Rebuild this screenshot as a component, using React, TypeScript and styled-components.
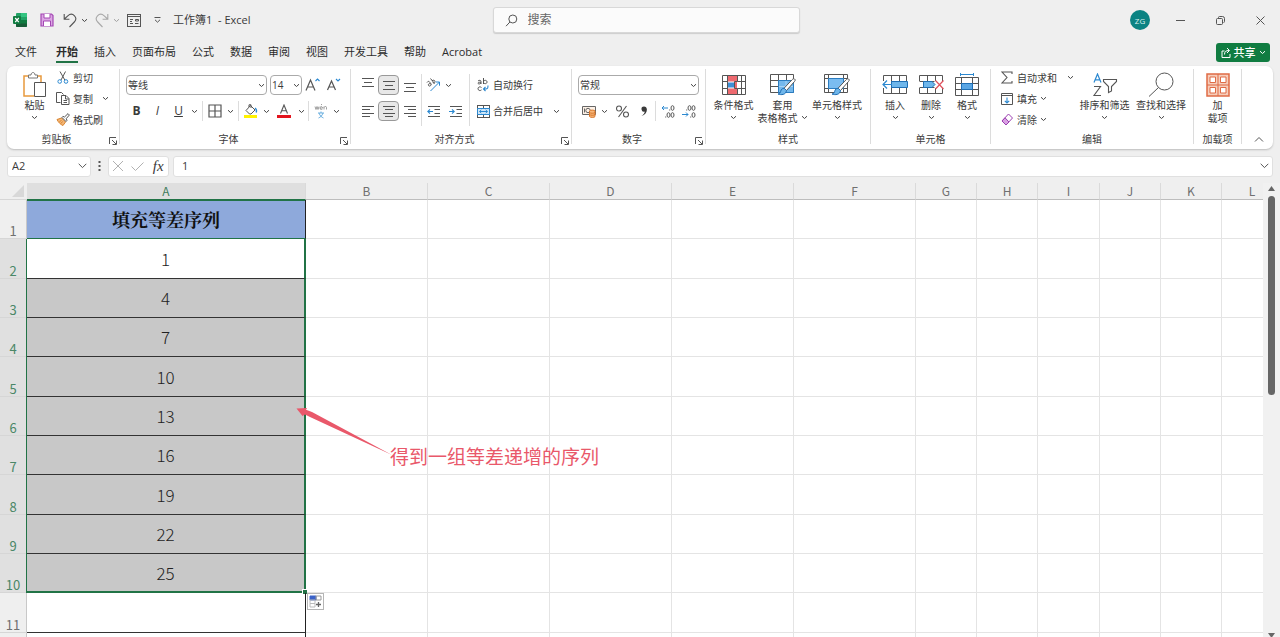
import React from "react";
import styled, { createGlobalStyle, css } from "styled-components";

const ui = '"Open Sans", "Noto Sans CJK SC", sans-serif';
const cjk = '"Noto Sans CJK SC", sans-serif';
const green = "#217346";
const ink = "#3a3a3a";
const line = "#555";
const blue = "#2b88d0";

const Global = createGlobalStyle`
  *, *::before, *::after { box-sizing: border-box; }
  body { margin: 0; background: #efefef; font-family: ${ui}; color: ${ink}; }
  button, select, input { font: inherit; color: inherit; }
  button { border: 0; background: none; padding: 0; cursor: pointer; }
  svg { display: block; flex: none; }
`;

const Page = styled.div`
  display: flex;
  flex-direction: column;
  height: 100vh;
  overflow: hidden;
`;

/* ---------- title bar ---------- */
const TitleBar = styled.header`
  display: grid;
  grid-template-columns: 1fr 307px 1fr;
  align-items: center;
  height: 40px;
  padding-left: 12px;
  flex: none;
`;
const QuickAccess = styled.div`
  display: flex;
  align-items: center;
`;
const ToolButton = styled.button<{ $w: number; $faded?: boolean }>`
  display: flex;
  align-items: center;
  justify-content: center;
  width: ${(p) => p.$w}px;
  height: 20px;
  opacity: ${(p) => (p.$faded ? 0.45 : 1)};
`;
const AppIcon = styled.span`
  width: 22px;
`;
const DocTitle = styled.h1`
  margin: 0 0 0 9px;
  font-size: 11px;
  line-height: 16px;
  font-weight: 400;
  white-space: nowrap;
`;
const SearchBox = styled.label`
  display: flex;
  align-items: center;
  gap: 10px;
  height: 26px;
  padding: 0 11px;
  background: #fbfbfb;
  border: 1px solid #d8d8d8;
  border-radius: 3px;
  box-shadow: 0 1px 1px #ccc;
`;
const SearchInput = styled.input`
  flex: 1;
  min-width: 0;
  border: 0;
  outline: 0;
  padding: 0;
  background: none;
  font-size: 12px;
  line-height: 16px;
  &::placeholder { color: #666; opacity: 1; }
`;
const WindowControls = styled.div`
  display: flex;
  justify-content: flex-end;
  align-items: center;
`;
const Avatar = styled.button`
  width: 20px;
  height: 20px;
  margin-right: 10px;
  border-radius: 50%;
  background: #0b8383;
  color: #d8f0f0;
  font-size: 8px;
`;

/* ---------- tabs ---------- */
const TabBar = styled.nav`
  display: flex;
  align-items: flex-start;
  height: 26px;
  padding: 3px 10px 0 15px;
  flex: none;
`;
const Tab = styled.a<{ $active?: boolean; $first?: boolean }>`
  margin-right: ${(p) => (p.$first ? 19 : 16)}px;
  padding-bottom: 1px;
  font-size: 11px;
  line-height: 17px;
  color: #2c2c2c;
  text-decoration: none;
  white-space: nowrap;
  border-bottom: 2px solid transparent;
  ${(p) => p.$active && css`
    font-weight: 700;
    border-color: ${green};
  `}
`;
const ShareButton = styled.button`
  display: flex;
  align-items: center;
  justify-content: center;
  gap: 3px;
  width: 54px;
  height: 19px;
  margin-left: auto;
  border-radius: 3px;
  background: #107c41;
  color: #fff;
  font-size: 11px;
  line-height: 16px;
  font-weight: 500;
`;

/* ---------- ribbon ---------- */
const Ribbon = styled.section`
  display: flex;
  height: 83px;
  margin: 0 7px;
  background: #fff;
  border-radius: 7px;
  box-shadow: 0 1px 2px #bbb;
  flex: none;
`;
const Rule = styled.span`
  width: 1px;
  margin: 3px 0 5px;
  background: #dcdcdc;
  flex: none;
`;
const InnerRule = styled.span<{ $gap?: number; $top?: number }>`
  width: 1px;
  align-self: stretch;
  margin: ${(p) => p.$top ?? 0}px ${(p) => p.$gap ?? 1}px 0;
  background: #dcdcdc;
  flex: none;
`;
const GroupBox = styled.div<{ $w: number }>`
  display: flex;
  flex-direction: column;
  width: ${(p) => p.$w}px;
  flex: none;
`;
const GroupBody = styled.div`
  display: flex;
  height: 66px;
  padding: 0 6px;
`;
const GroupFoot = styled.div`
  display: flex;
  height: 15px;
`;
const GroupName = styled.span`
  flex: 1;
  text-align: center;
  font-size: 10px;
  line-height: 15px;
`;
const Launcher = styled.button`
  display: flex;
  align-items: center;
  justify-content: center;
  width: 13px;
  padding-top: 2px;
`;
const BigButton = styled.button<{ $w: number }>`
  display: flex;
  flex-direction: column;
  align-items: center;
  width: ${(p) => p.$w}px;
  padding-top: 5px;
  font-size: 10px;
  line-height: 12px;
  white-space: nowrap;
  flex: none;
`;
const BigIcon = styled.span`
  display: flex;
  align-items: center;
  height: 27px;
`;
const BigLine = styled.span`
  display: flex;
  align-items: center;
  gap: 3px;
  height: 13px;
`;
const Column = styled.div<{ $pad?: number }>`
  display: flex;
  flex-direction: column;
  padding: 1px 0 0 ${(p) => p.$pad ?? 0}px;
`;
const SmallButton = styled.button`
  display: flex;
  align-items: center;
  gap: 3px;
  height: 21px;
  font-size: 10px;
  line-height: 14px;
  white-space: nowrap;
`;
const IconSlot = styled.span`
  display: flex;
  justify-content: center;
  width: 14px;
  flex: none;
`;
const Wide = styled.span<{ $w: number }>`
  width: ${(p) => p.$w}px;
  text-align: left;
`;
const Stack = styled.div`
  display: flex;
  flex-direction: column;
  gap: 6px;
  padding-top: 9px;
  height: 58px;
`;
const Strip = styled.div`
  display: flex;
  align-items: center;
  height: 20px;
`;
const SplitBody = styled.div`
  display: flex;
  height: 60px;
`;
const Cmd = styled.button<{ $w: number; $on?: boolean; $size?: number }>`
  display: flex;
  align-items: center;
  justify-content: center;
  width: ${(p) => p.$w}px;
  height: 20px;
  font-size: ${(p) => p.$size ?? 12}px;
  line-height: 16px;
  border-radius: 4px;
  flex: none;
  ${(p) => p.$on && css`
    background: #e8e8e8;
    border: 1px solid #999;
  `}
`;
const TextCmd = styled.button`
  display: flex;
  align-items: center;
  gap: 3px;
  height: 20px;
  padding-left: 5px;
  font-size: 10px;
  line-height: 14px;
  white-space: nowrap;
`;
const PickWrap = styled.span<{ $w: number }>`
  display: grid;
  width: ${(p) => p.$w}px;
  height: 20px;
  margin-right: 3px;
  align-items: center;
  & > * { grid-area: 1 / 1; }
  & > svg { justify-self: end; margin-right: 2px; pointer-events: none; }
`;
const Pick = styled.select`
  appearance: none;
  width: 100%;
  height: 20px;
  padding: 0 1px;
  border: 1px solid #aaa;
  border-radius: 4px;
  background: #fff;
  font-size: 10px;
  line-height: 16px;
`;
const CollapseArea = styled.div`
  display: flex;
  flex: 1;
  align-items: flex-end;
  justify-content: flex-end;
  padding: 0 9px 4px 0;
`;

/* ---------- formula bar ---------- */
const FormulaBar = styled.section`
  display: flex;
  align-items: center;
  height: 34px;
  padding: 0 7px;
  flex: none;
`;
const Field = styled.div<{ $w?: number }>`
  display: flex;
  align-items: center;
  ${(p) => (p.$w ? `width: ${p.$w}px; flex: none;` : "flex: 1;")}
  height: 21px;
  background: #fff;
  border: 1px solid #e0e0e0;
  border-radius: 3px;
`;
const FieldInput = styled.input<{ $pad: number }>`
  flex: 1;
  min-width: 0;
  border: 0;
  outline: 0;
  padding: 0 0 0 ${(p) => p.$pad}px;
  background: none;
  font-size: 11px;
  line-height: 16px;
`;
const FxButton = styled.button`
  width: 20px;
  font: italic 400 15px/18px "Liberation Serif", serif;
`;

/* ---------- sheet ---------- */
const Sheet = styled.main`
  display: flex;
  flex: 1;
  min-height: 0;
`;
const Viewport = styled.div`
  position: relative;
  flex: 1;
  min-width: 0;
  overflow: hidden;
  background: #fff;
`;
const Grid = styled.table`
  table-layout: fixed;
  width: 1283px;
  border-collapse: separate;
  border-spacing: 0;
  font-family: ${cjk};
`;
const ColHead = styled.th<{ $on?: boolean }>`
  padding: 0;
  height: 17px;
  font-weight: 400;
  font-size: 12px;
  line-height: 14px;
  color: ${(p) => (p.$on ? "#3f7d5c" : "#707070")};
  background: ${(p) => (p.$on ? "#dfdfdf" : "#efefef")};
  border-right: 1px solid #dadada;
  border-bottom: 1px solid ${(p) => (p.$on ? green : "#bdbdbd")};
`;
const Corner = styled.td`
  padding: 0;
  height: 17px;
  background: #efefef;
  border-bottom: 1px solid #d6d6d6;
  svg { margin-left: 12px; }
`;
const Row = styled.tr`
  height: 39px;
  &:nth-child(3n + 2) { height: 40px; }
`;
const RowHead = styled.th<{ $on?: boolean }>`
  padding: 0;
  vertical-align: bottom;
  font-weight: 400;
  font-size: 13px;
  line-height: 14px;
  color: ${(p) => (p.$on ? "#4a8767" : "#707070")};
  background: ${(p) => (p.$on ? "#e0e0e0" : "#efefef")};
  border-right: 1px solid #c8c8c8;
  border-bottom: 1px solid #d6d6d6;
`;
const Cell = styled.td`
  padding: 0;
  border-right: 1px solid #e4e4e4;
  border-bottom: 1px solid #e4e4e4;
`;
const DataCell = styled.td<{ $kind: "title" | "active" | "picked" | "last" | "plain" }>`
  position: relative;
  padding: 0;
  text-align: center;
  font-weight: 300;
  font-size: 17px;
  line-height: 24px;
  color: #222;
  border-right: 1px solid #222;
  border-bottom: 1px solid #333;
  ${(p) => p.$kind === "title" && css`
    background: #8ea9db;
    color: #111;
    font-family: "Noto Serif CJK SC", "Noto Sans CJK SC", serif;
    font-size: 18px;
    font-weight: 700;
    border-bottom: 1px solid ${green};
    box-shadow: inset 0 1px 0 ${green};
  `}
  ${(p) => (p.$kind === "active" || p.$kind === "picked" || p.$kind === "last") && css`
    background: ${p.$kind === "active" ? "#fff" : "#c8c8c8"};
    border-right: 2px solid ${green};
    box-shadow: -1px 0 0 ${green};
  `}
  ${(p) => p.$kind === "last" && css`
    border-bottom: 2px solid ${green};
  `}
`;
const FillHandle = styled.span`
  position: absolute;
  right: -3px;
  bottom: -3px;
  width: 5px;
  height: 5px;
  background: ${green};
  border: 1px solid #fff;
  border-width: 1px 0 0 1px;
`;
const FillOptions = styled.button`
  position: absolute;
  left: 280px;
  top: 39px;
  z-index: 2;
  display: flex;
  align-items: center;
  justify-content: center;
  width: 17px;
  height: 17px;
  background: #fff;
  border: 1px solid #b5b5b5;
`;
const Note = styled.div`
  position: absolute;
  left: 296px;
  top: 224px;
  display: flex;
  align-items: flex-end;
  color: #e9586a;
  font-family: ${cjk};
  font-size: 19px;
  line-height: 24px;
  white-space: nowrap;
  pointer-events: none;
`;
const NoteText = styled.span`
  margin: 0 0 -11px -2px;
`;
const ScrollTrack = styled.div`
  display: flex;
  flex-direction: column;
  align-items: center;
  gap: 5px;
  width: 17px;
  padding-top: 3px;
  background: #f1f1f1;
  flex: none;
`;
const Thumb = styled.div`
  width: 7px;
  height: 199px;
  border-radius: 4px;
  background: #666;
`;
const TrackSpace = styled.div`
  flex: 1;
`;

/* ---------- icons ---------- */
type SvgProps = { w: number; h: number; children: React.ReactNode };
const Svg = ({ w, h, children }: SvgProps) => (
  <svg width={w} height={h} viewBox={`0 0 ${w} ${h}`} fill="none" stroke={line} strokeWidth="1" aria-hidden="true">
    {children}
  </svg>
);
const Chevron = ({ color = "#444" }: { color?: string }) => (
  <svg width="7" height="5" viewBox="0 0 7 5" fill="none" stroke={color} aria-hidden="true">
    <path d="M1 1.200 3.500 3.500 6 1.200" />
  </svg>
);
const WideChevron = () => (
  <Svg w={9} h={6}><path d="M.7.8 4.500 4.600 8.300.8" /></Svg>
);
const ExcelLogo = () => (
  <svg width="15" height="14" viewBox="0 0 15 14" aria-hidden="true">
    <rect x="4" y="0" width="11" height="14" rx="1" fill="#21a366" />
    <path d="M9 0h5a1 1 0 0 1 1 1v3H9z" fill="#33c481" />
    <path d="M4 7h11v6a1 1 0 0 1-1 1H5a1 1 0 0 1-1-1z" fill="#185c37" />
    <path d="M9 7h6v3.500H9z" fill="#107c41" />
    <rect x="1" y="3" width="8" height="8" rx="1" fill="#107c41" />
    <path d="M3.200 5 6.800 9.200M6.800 5 3.200 9.200" stroke="#fff" strokeWidth="1.200" />
  </svg>
);
const SaveIcon = () => (
  <Svg w={14} h={14}>
    <path d="M1 1h10.500L13 2.500V13H1z" fill="#dca6e4" stroke="#a347b3" strokeWidth="1.200" />
    <path d="M4 1v4h6V1M3.500 13V8h7v5" fill="#fff" stroke="#a347b3" />
  </Svg>
);
const UndoIcon = () => (
  <Svg w={14} h={15}><path d="M1.200 1v5.200h5.200M1.400 6l3.400-3.200c2.200-2 5-1.800 6.700 0 1.700 1.900 1.500 4.500-.2 6.200L6.500 14" strokeWidth="1.100" /></Svg>
);
const RedoIcon = () => (
  <Svg w={14} h={15}><path d="M12.800 1v5.200H7.600M12.600 6 9.200 2.800C7 .8 4.200 1 2.500 2.800.8 4.700 1 7.300 2.700 9l4.800 5" strokeWidth="1.100" /></Svg>
);
const FormIcon = () => (
  <Svg w={14} h={13}>
    <rect x=".5" y=".5" width="13" height="12" />
    <path d="M.5 2.500h13M3 5.500h3M3 7.500h2M3 9.500h3M8.500 5.500h3v1.500h-3zM8 9.500h3.500" />
  </Svg>
);
const CustomizeIcon = () => (
  <Svg w={7} h={6}><path d="M.5.5h6M1 2.800l2.500 2.400L6 2.800" /></Svg>
);
const SearchIcon = () => (
  <Svg w={13} h={13}><circle cx="7.800" cy="5" r="4" /><path d="M4.900 8 1 12.200" /></Svg>
);
const PasteIcon = () => (
  <Svg w={24} h={26}>
    <path d="M6 4H1v20h10" stroke="#e8993d" strokeWidth="1.500" />
    <path d="M14 4h4v6" stroke="#e8993d" strokeWidth="1.500" />
    <path d="M5.500 6V3H8c0-3.300 4-3.300 4 0h2.500v3z" fill="#fff" stroke="#777" />
    <path d="M11.500 10.500h11v14h-11z" fill="#fff" stroke="#555" />
  </Svg>
);
const CutIcon = () => (
  <Svg w={12} h={13}>
    <path d="M3 .5 7.800 9M8.500.5 4 9" />
    <circle cx="2.700" cy="10.500" r="1.800" stroke={blue} /><circle cx="9" cy="10.500" r="1.800" stroke={blue} />
  </Svg>
);
const CopyIcon = () => (
  <Svg w={14} h={13}>
    <path d="M4.500 10.500h-4V.5h5l2 2" /><path d="M5.500 3.500h4.500l3 3v6h-7.500zM9.500 3.500v3.500h3.500M7.500 8.500h3.500M7.500 10.500h3.500" fill="#fff" />
  </Svg>
);
const BrushIcon = () => (
  <Svg w={14} h={13}>
    <path d="M1 6.500 5.500 5l4 4-2.500 3.500C4.500 11.500 2.500 9.500 1 6.500z" fill="#f3b778" stroke="#d9822b" />
    <path d="m6 4.500 4 4 1-1.200-.8-1.600L13.400 2 12 .6 8.500 4l-1.600-.6z" fill="#fff" stroke="#555" />
    <path d="m3.500 8.500 2-1M5 10.500l1.500-2" stroke="#d9822b" />
  </Svg>
);
const LaunchIcon = () => (
  <Svg w={8} h={8}><path d="M.5 7V.5H7M3 3l4 4M7.500 3.500v4h-4" /></Svg>
);
const BordersIcon = () => (
  <Svg w={14} h={14}><path d="M1 1h12v12H1zM7 1v12M1 7h12" strokeWidth="1.200" /></Svg>
);
const FillColorIcon = () => (
  <Svg w={14} h={15}>
    <path d="M6.500 1.500 2 6.500l3.500 3.500h1.500L11 6z" /><path d="M5 3V.8h2V4" /><path d="M11 4c1.500 1 1.800 2.500 1.300 4.500" stroke={blue} strokeWidth="1.400" />
    <path d="M0 12.500h13" stroke="#fff200" strokeWidth="3" />
  </Svg>
);
const FontColorIcon = () => (
  <Svg w={14} h={15}>
    <path d="M3.500 9.500 7 1l3.500 8.500M4.700 6.800h4.600" strokeWidth="1.100" /><path d="M0 12.500h14" stroke="#e3141e" strokeWidth="3" />
  </Svg>
);
const PhoneticIcon = () => (
  <Svg w={14} h={15}>
    <path d="m1 2.500 1 3 1-3 1 3 1-3M6 4h2.500c0-2-2.500-2-2.500 0s1.500 1.700 2.500 1M10 5.500v-3M10 3.500c.8-1.500 2.500-1.200 2.500 0v2M7 1l1-1" stroke="#888" strokeWidth=".8" />
    <path d="M4 9h6M7 7.500V9M5 9c1 3 2.500 4 4.500 5M9 9c-1 3-2.500 4-4.500 5" stroke="#5fa8dc" strokeWidth=".9" />
  </Svg>
);
const Lines = ({ rows, ys, h = 13 }: { rows: [number, number][]; ys: number[]; h?: number }) => (
  <Svg w={13} h={h}>
    {rows.map(([a, b], i) => <path key={i} d={`M${a} ${ys[i]}H${b}`} />)}
  </Svg>
);
const TopIcon = () => <Lines rows={[[1, 13], [3, 11], [1, 13]]} ys={[2.5, 6.5, 10.5]} h={18} />;
const MiddleIcon = () => <Lines rows={[[1, 13], [3, 11], [1, 13]]} ys={[2.5, 6.5, 10.5]} />;
const BottomIcon = () => <Lines rows={[[1, 13], [3, 11], [1, 13]]} ys={[7.5, 11.5, 15.5]} h={18} />;
const LeftIcon = () => <Lines rows={[[1, 13], [1, 9], [1, 13], [1, 9]]} ys={[1.5, 4.5, 8.5, 11.5]} />;
const CenterIcon = () => <Lines rows={[[1, 13], [3, 11], [1, 13], [3, 11]]} ys={[1.5, 4.5, 8.5, 11.5]} />;
const RightIcon = () => <Lines rows={[[1, 13], [5, 13], [1, 13], [5, 13]]} ys={[1.5, 4.5, 8.5, 11.5]} />;
const OrientIcon = () => (
  <Svg w={15} h={14}>
    <path d="M1 4.500c1-1.500 2-1.500 3 0l1.500 2M4.200 5.500c-1.500 0-2.500 1.200-1.500 2.200s2.500 0 2.200-1.500M4.500.5l4 5M6 2.800c1.200-1.200 3-.6 3 .8s-1.200 2-2.300 1" />
    <path d="M4.500 13 13.500 4M9.800 4h3.700v3.700" stroke={blue} />
  </Svg>
);
const IndentIcon = ({ right }: { right?: boolean }) => (
  <Svg w={13} h={13}>
    <path d="M1 1.500h12M7.500 4.500H13M7.500 8.500H13M1 11.500h12" />
    <path d={right ? "M0 6.500h5M3 4.300 5.200 6.500 3 8.700" : "M.8 6.500H6M3 4.300.8 6.500 3 8.700"} stroke={blue} strokeWidth="1.100" />
  </Svg>
);
const WrapIcon = () => (
  <Svg w={13} h={14}>
    <path d="M1 3c1-1 3-1 3 .5V6M4 4.300C2 4 1 4.500 1 5.300S3.500 6.300 4 5M6.500 0v6M6.500 4c0-2.200 3.500-2.200 3.500 0s-3.500 2.200-3.500 0M4.500 9.500c-1.500-1.300-3.500-.5-3.500 1.200s2 2.500 3.500 1.200" />
    <path d="M10.800 7.500c.6 2-.3 3.500-2 3.500H6.500M8.500 9 6.500 11l2 2" stroke={blue} strokeWidth="1.100" />
  </Svg>
);
const MergeIcon = () => (
  <Svg w={13} h={13}>
    <rect x=".5" y=".5" width="12" height="12" /><path d="M6.500.5v3M6.500 9.500v3" />
    <path d="M.5 3.500h12v6H.5z" fill="#cfe6f8" stroke={blue} /><path d="M2.500 6.500h8M4.300 4.900 2.600 6.500l1.700 1.600M8.700 4.900l1.700 1.600-1.700 1.600" stroke={blue} />
  </Svg>
);
const CurrencyIcon = () => (
  <Svg w={14} h={13}>
    <path d="M.5 1.500h13v8H.5z" fill="#fdf1e6" stroke="#666" /><circle cx="6" cy="5.500" r="2.200" stroke="#666" /><path d="M2.500 3.500v4" stroke="#666" />
    <path d="M7.500 6v5.500c0 1.200 5.500 1.200 5.500 0V6c0-1.200-5.500-1.200-5.500 0zM7.500 7.500c1 1 4.500 1 5.500 0M7.500 9.500c1 1 4.500 1 5.500 0" fill="#f7b77a" stroke="#d9772b" />
  </Svg>
);
const PercentIcon = () => (
  <Svg w={13} h={13}><circle cx="3" cy="3.500" r="2.500" strokeWidth="1.100" /><circle cx="10" cy="9.500" r="2.500" strokeWidth="1.100" /><path d="M10.500 1 2.500 12" strokeWidth="1.100" /></Svg>
);
const CommaIcon = () => (
  <Svg w={8} h={13}><path d="M4 1.500a2.600 2.600 0 1 0 .8 5.100C4.500 8.500 3.500 9.700 1.500 11c3.500-1 5.500-3.700 5.400-6.500C6.800 2.500 5.700 1.500 4 1.500z" fill={ink} stroke="none" /></Svg>
);
const DecimalIcon = ({ less }: { less?: boolean }) => (
  <Svg w={14} h={13}>
    {less ? (
      <>
        <ellipse cx="7.500" cy="3" rx="1.500" ry="2.300" /><ellipse cx="11.500" cy="3" rx="1.500" ry="2.300" /><path d="M4.200 5h1" />
        <ellipse cx="11.500" cy="10" rx="1.500" ry="2.300" /><path d="M8.200 12h1" />
        <path d="M0 9.500h6M4 7.500l2 2-2 2" stroke={blue} />
      </>
    ) : (
      <>
        <ellipse cx="11.500" cy="3" rx="1.500" ry="2.300" /><path d="M8.200 5h1" />
        <ellipse cx="7.500" cy="10" rx="1.500" ry="2.300" /><ellipse cx="11.500" cy="10" rx="1.500" ry="2.300" /><path d="M4.200 12h1" />
        <path d="M1 3h6M3 1 1 3l2 2" stroke={blue} />
      </>
    )}
  </Svg>
);
const CondIcon = () => (
  <Svg w={24} h={20}>
    <path d="M5 1h10v5.500H5zM5 13.500h10V19H5z" fill="#ee6a70" stroke="none" />
    <path d="M12 7h3v6h-3z" fill="#ee6a70" stroke="none" />
    <path d="M5 7.500h7v5H5z" fill="#3f8fd6" stroke="none" />
    <path d="M.5.5h23v19H.5zM.5 6.500h5M15.500 6.500h8M.5 13.500h5M15.500 13.500h8M5.500.5v19M19.500.5v19M15.500.5v6h-3v7h3v6" />
  </Svg>
);
const Brush = () => (
  <>
    <path d="M24.500 6c1 .7.800 1.500 0 2.500l-8 9-2.500-2.200 8-8.500c1-1 1.700-1.300 2.500-.8z" fill="#fff" stroke="#555" />
    <path d="M14.200 15.300c-2 0-3 1-3.500 3-.3 1.500-1.200 2.500-2.700 2.700 3 1.200 8 1 8.500-3.500z" fill="#6fb6ea" stroke="#1f6fb5" />
  </>
);
const TableStyleIcon = () => (
  <Svg w={26} h={23}>
    <path d="M.5 1.500h23v18H.5zM.5 7.500h23M.5 13.500h23M8.500 1.500v18M16.500 1.500v18" />
    <path d="M8.500 7.500h15v12h-15z" fill="#74b8ec" stroke="#2b7cc0" /><path d="M16 8v11M9 13.500h14" stroke="#a8d3f5" />
    <Brush />
  </Svg>
);
const CellStyleIcon = () => (
  <Svg w={26} h={23}>
    <path d="M.5 1.500h23v18H.5zM.5 5.500h23M.5 15.500h23M4.500 1.500v18M19.500 1.500v18" />
    <path d="M4.500 5.500h15v10h-15z" fill="#7bbcf0" stroke="#2b7cc0" />
    <Brush />
  </Svg>
);
const InsertIcon = () => (
  <Svg w={26} h={19}>
    <path d="M1.500.5h23v18h-23zM9.500.5v18M17.500.5v18M1.500 6.500h23M1.500 12.500h23" />
    <path d="M0 6h9v7H0z" fill="#fff" stroke="none" />
    <path d="M9.500 6.500h16v6h-16z" fill="#6fb6ea" stroke="#1f6fb5" /><path d="M1 9.500h9M5 5.500l-4 4 4 4" stroke={blue} strokeWidth="1.200" />
  </Svg>
);
const DeleteIcon = () => (
  <Svg w={25} h={19}>
    <path d="M.5 6V.5h23V6M.5 13v5.500h23V13M8.500.5V6M16.500.5V6M8.500 13v5.500M16.500 13v5.500M.5 6.500h15M.5 12.500h15" />
    <path d="M4.500 6.500h8.500l3 3-3 3H4.500z" fill="#6fb6ea" stroke="#1f6fb5" /><path d="m16.500 5.500 8 8.500M24.500 5.500l-8 8.500" stroke="#e0505c" strokeWidth="1.200" />
  </Svg>
);
const FormatIcon = () => (
  <Svg w={24} h={24}>
    <path d="M6 1.500h12M5.500 0v3M18.500 0v3" stroke={blue} />
    <path d="M.5 4.500h23v18H.5zM.5 10.500h23M.5 16.500h23M6.500 4.500v18M17.500 4.500v18" /><path d="M6.500 10.500h11v6h-11z" fill="#5aa6e4" stroke="#1f6fb5" />
  </Svg>
);
const SumIcon = () => (
  <Svg w={12} h={13}><path d="M11 3V1H1l5 5.500L1 12h10v-2" strokeWidth="1.100" /></Svg>
);
const FillDownIcon = () => (
  <Svg w={12} h={12}><path d="M.5.5h11v11H.5zM.5 2.500h11" /><path d="M6 4.500V10M3.800 7.800 6 10l2.200-2.200" stroke={blue} strokeWidth="1.100" /></Svg>
);
const EraserIcon = () => (
  <Svg w={12} h={13}><path d="M7.500 1 11.500 5 5 12 1 8z" fill="#fff" stroke="#9b3fb0" /><path d="M4 4.800 8 9 5 12 1 8z" fill="#d9a0e3" stroke="#9b3fb0" /></Svg>
);
const SortIcon = () => (
  <Svg w={26} h={24}>
    <path d="M2 9.500 5.500 1 9 9.500M3.200 6.800h4.600" stroke={blue} strokeWidth="1.200" /><path d="M2 13.500h6.500L2 22.500h7" strokeWidth="1.100" />
    <path d="M11.500 6.500h13v2l-5 5v4.500l-3 1.500v-6l-5-5z" strokeWidth="1.100" />
  </Svg>
);
const FindIcon = () => (
  <Svg w={26} h={25}><circle cx="16.500" cy="9.500" r="8.500" /><path d="M10.500 15.500 1 24.500" /></Svg>
);
const AddinIcon = () => (
  <Svg w={24} h={24}>
    <rect x="1" y="1" width="22" height="22" fill="#f6cdbb" stroke="#df6b45" strokeWidth="1.500" /><path d="M12 1v22M1 12h22" stroke="#df6b45" />
    <path d="M4 4h5.500v5.500H4zM14.500 4H20v5.500h-5.500zM4 14.500h5.500V20H4zM14.500 14.500H20V20h-5.500z" fill="#fff" stroke="#df6b45" />
  </Svg>
);
const GrowIcon = ({ down }: { down?: boolean }) => (
  <Svg w={15} h={14}>
    <path d={down ? "M1.500 12 5.500 3l4 9M2.800 9h5.400" : "M1 12.500 5.500 2 10 12.500M2.600 9h5.800"} strokeWidth="1.200" />
    <path d={down ? "m10 1 2 2 2-2" : "m10.500 3 2-2 2 2"} stroke={blue} strokeWidth="1.100" />
  </Svg>
);

/* ---------- composition ---------- */
const Group = ({ w, name, launch, children }: { w: number; name: string; launch?: boolean; children: React.ReactNode }) => (
  <>
    <GroupBox $w={w}>
      <GroupBody>{children}</GroupBody>
      <GroupFoot>
        <GroupName>{name}</GroupName>
        {launch && <Launcher aria-label={`${name}设置`}><LaunchIcon /></Launcher>}
      </GroupFoot>
    </GroupBox>
    <Rule />
  </>
);
const Big = ({ w, icon, text, second, arrow = true }: { w: number; icon: React.ReactNode; text: string; second?: string; arrow?: boolean }) => (
  <BigButton $w={w}>
    <BigIcon>{icon}</BigIcon>
    <BigLine>{text}</BigLine>
    <BigLine>{second}{arrow && <Chevron />}</BigLine>
  </BigButton>
);
const Small = ({ icon, children }: { icon: React.ReactNode; children: React.ReactNode }) => (
  <SmallButton><IconSlot>{icon}</IconSlot>{children}</SmallButton>
);
const Dropdown = ({ w, label, value }: { w: number; label: string; value: string }) => (
  <PickWrap $w={w}>
    <Pick aria-label={label} defaultValue={value}><option>{value}</option></Pick>
    <Chevron />
  </PickWrap>
);

const tabs = ["文件", "开始", "插入", "页面布局", "公式", "数据", "审阅", "视图", "开发工具", "帮助", "Acrobat"];
const columns = ["A", "B", "C", "D", "E", "F", "G", "H", "I", "J", "K", "L"];
const columnWidths = [27, 279, 122, 122, 122, 122, 122, 61, 61, 62, 61, 61, 61];
const values = ["填充等差序列", "1", "4", "7", "10", "13", "16", "19", "22", "25", "", ""];

const kindOf = (i: number) => {
  if (i === 0) return "title" as const;
  if (i === 1) return "active" as const;
  if (i === 9) return "last" as const;
  return i < 9 ? ("picked" as const) : ("plain" as const);
};

export default function App() {
  return (
    <>
      <Global />
      <Page>
        <TitleBar>
          <QuickAccess>
            <AppIcon><ExcelLogo /></AppIcon>
            <ToolButton $w={26} aria-label="保存"><SaveIcon /></ToolButton>
            <ToolButton $w={20} aria-label="撤销"><UndoIcon /></ToolButton>
            <ToolButton $w={9} aria-label="撤销列表"><Chevron /></ToolButton>
            <ToolButton $w={25} $faded aria-label="恢复"><RedoIcon /></ToolButton>
            <ToolButton $w={4} $faded aria-label="恢复列表"><Chevron /></ToolButton>
            <ToolButton $w={32} aria-label="窗体"><FormIcon /></ToolButton>
            <ToolButton $w={14} aria-label="自定义快速访问工具栏"><CustomizeIcon /></ToolButton>
            <DocTitle>工作簿1&nbsp; - Excel</DocTitle>
          </QuickAccess>
          <SearchBox>
            <SearchIcon />
            <SearchInput aria-label="搜索" placeholder="搜索" />
          </SearchBox>
          <WindowControls>
            <Avatar>ZG</Avatar>
            <ToolButton $w={40} aria-label="最小化"><Svg w={9} h={9}><path d="M0 4.500h9" /></Svg></ToolButton>
            <ToolButton $w={40} aria-label="还原"><Svg w={9} h={9}><rect x=".5" y="2.500" width="6" height="6" rx="1" /><path d="M2.500 2V1.500a1 1 0 0 1 1-1h3a2 2 0 0 1 2 2v3a1 1 0 0 1-1 1" /></Svg></ToolButton>
            <ToolButton $w={40} aria-label="关闭"><Svg w={9} h={9}><path d="m.5.5 8 8M8.500.5l-8 8" /></Svg></ToolButton>
          </WindowControls>
        </TitleBar>

        <TabBar>
          {tabs.map((t, i) => <Tab key={t} href="#" $active={i === 1} $first={i === 0}>{t}</Tab>)}
          <ShareButton>
            <svg width="10" height="11" viewBox="0 0 10 11" fill="none" stroke="#fff" aria-hidden="true"><path d="M3.500 4H1v6.500h8V7M3.500 7.500c0-3 1.500-4 4.500-4M6 1l2.500 2.500L6 6" /></svg>
            共享
            <Chevron color="#fff" />
          </ShareButton>
        </TabBar>

        <Ribbon>
          <Group w={112} name="剪贴板" launch>
            <Big w={43} icon={<PasteIcon />} text="粘贴" />
            <Column>
              <Small icon={<CutIcon />}>剪切</Small>
              <Small icon={<CopyIcon />}><Wide $w={26}>复制</Wide><Chevron /></Small>
              <Small icon={<BrushIcon />}>格式刷</Small>
            </Column>
          </Group>

          <Group w={230} name="字体" launch>
            <Stack>
              <Strip>
                <Dropdown w={141} label="字体" value="等线" />
                <Dropdown w={32} label="字号" value="14" />
                <Cmd $w={15} aria-label="增大字号"><GrowIcon /></Cmd>
                <Cmd $w={27} aria-label="减小字号"><GrowIcon down /></Cmd>
              </Strip>
              <Strip>
                <Cmd $w={21} aria-label="加粗"><b>B</b></Cmd>
                <Cmd $w={21} aria-label="倾斜"><i>I</i></Cmd>
                <Cmd $w={21} aria-label="下划线"><u>U</u></Cmd>
                <Cmd $w={11} aria-label="下划线样式"><Chevron /></Cmd>
                <InnerRule $gap={2} />
                <Cmd $w={20} aria-label="边框"><BordersIcon /></Cmd>
                <Cmd $w={11} aria-label="边框样式"><Chevron /></Cmd>
                <InnerRule $gap={2} />
                <Cmd $w={20} aria-label="填充颜色"><FillColorIcon /></Cmd>
                <Cmd $w={11} aria-label="填充颜色列表"><Chevron /></Cmd>
                <Cmd $w={24} aria-label="字体颜色"><FontColorIcon /></Cmd>
                <Cmd $w={10} aria-label="字体颜色列表"><Chevron /></Cmd>
                <InnerRule $gap={2} />
                <Cmd $w={20} aria-label="拼音"><PhoneticIcon /></Cmd>
                <Cmd $w={11} aria-label="拼音列表"><Chevron /></Cmd>
              </Strip>
            </Stack>
          </Group>

          <Group w={220} name="对齐方式" launch>
            <SplitBody>
              <Stack>
                <Strip>
                  <Cmd $w={21} aria-label="顶端对齐"><TopIcon /></Cmd>
                  <Cmd $w={21} $on aria-label="垂直居中"><MiddleIcon /></Cmd>
                  <Cmd $w={21} aria-label="底端对齐"><BottomIcon /></Cmd>
                </Strip>
                <Strip>
                  <Cmd $w={21} aria-label="左对齐"><LeftIcon /></Cmd>
                  <Cmd $w={21} $on aria-label="居中"><CenterIcon /></Cmd>
                  <Cmd $w={21} aria-label="右对齐"><RightIcon /></Cmd>
                </Strip>
              </Stack>
              <InnerRule $gap={1} $top={8} />
              <Stack>
                <Strip>
                  <Cmd $w={21} aria-label="方向"><OrientIcon /></Cmd>
                  <Cmd $w={9} aria-label="方向列表"><Chevron /></Cmd>
                </Strip>
                <Strip>
                  <Cmd $w={21} aria-label="减少缩进"><IndentIcon /></Cmd>
                  <Cmd $w={23} aria-label="增加缩进"><IndentIcon right /></Cmd>
                </Strip>
              </Stack>
              <InnerRule $gap={2} $top={8} />
              <Stack>
                <TextCmd><WrapIcon />自动换行</TextCmd>
                <TextCmd><MergeIcon /><Wide $w={57}>合并后居中</Wide><Chevron /></TextCmd>
              </Stack>
            </SplitBody>
          </Group>

          <Group w={133} name="数字" launch>
            <Stack>
              <Strip><Dropdown w={121} label="数字格式" value="常规" /></Strip>
              <Strip>
                <Cmd $w={21} aria-label="会计数字格式"><CurrencyIcon /></Cmd>
                <Cmd $w={10} aria-label="会计格式列表"><Chevron /></Cmd>
                <Cmd $w={26} aria-label="百分比样式"><PercentIcon /></Cmd>
                <Cmd $w={18} aria-label="千位分隔样式"><CommaIcon /></Cmd>
                <InnerRule $gap={2} />
                <Cmd $w={20} aria-label="增加小数位数"><DecimalIcon /></Cmd>
                <Cmd $w={22} aria-label="减少小数位数"><DecimalIcon less /></Cmd>
              </Strip>
            </Stack>
          </Group>

          <Group w={164} name="样式">
            <Big w={43} icon={<CondIcon />} text="条件格式" />
            <Big w={55} icon={<TableStyleIcon />} text="套用" second="表格格式" />
            <Big w={54} icon={<CellStyleIcon />} text="单元格样式" />
          </Group>

          <Group w={119} name="单元格">
            <Big w={36} icon={<InsertIcon />} text="插入" />
            <Big w={36} icon={<DeleteIcon />} text="删除" />
            <Big w={36} icon={<FormatIcon />} text="格式" />
          </Group>

          <Group w={202} name="编辑">
            <Column $pad={3}>
              <Small icon={<SumIcon />}><Wide $w={47}>自动求和</Wide><Chevron /></Small>
              <Small icon={<FillDownIcon />}>填充<Chevron /></Small>
              <Small icon={<EraserIcon />}>清除<Chevron /></Small>
            </Column>
            <Big w={61} icon={<SortIcon />} text="排序和筛选" />
            <Big w={52} icon={<FindIcon />} text="查找和选择" />
          </Group>

          <Group w={47} name="加载项">
            <Big w={35} icon={<AddinIcon />} text="加" second="载项" arrow={false} />
          </Group>
          <CollapseArea>
            <button aria-label="折叠功能区"><Svg w={10} h={10}><path d="M1 6.500 5 2.500l4 4" /></Svg></button>
          </CollapseArea>
        </Ribbon>

        <FormulaBar>
          <Field $w={84}>
            <FieldInput $pad={4} aria-label="名称框" defaultValue="A2" />
            <ToolButton $w={15} aria-label="名称列表"><WideChevron /></ToolButton>
          </Field>
          <ToolButton $w={17} aria-label="调整大小"><Svg w={3} h={10}><path d="M1.500 0v2M1.500 4v2M1.500 8v2" strokeWidth="2" /></Svg></ToolButton>
          <Field $w={61}>
            <ToolButton $w={18} $faded aria-label="取消"><Svg w={10} h={10}><path d="m0 0 10 10M10 0 0 10" /></Svg></ToolButton>
            <ToolButton $w={22} $faded aria-label="输入"><Svg w={13} h={9}><path d="m.5 4.500 4 4 8-8" /></Svg></ToolButton>
            <FxButton aria-label="插入函数">fx</FxButton>
          </Field>
          <ToolButton as="span" $w={4} />
          <Field>
            <FieldInput $pad={8} aria-label="编辑栏" defaultValue="1" />
            <ToolButton $w={15} aria-label="展开编辑栏"><WideChevron /></ToolButton>
          </Field>
        </FormulaBar>

        <Sheet>
          <Viewport>
            <Grid>
              <colgroup>{columnWidths.map((w, i) => <col key={i} width={w} />)}</colgroup>
              <thead>
                <tr>
                  <Corner><svg width="12" height="12" viewBox="0 0 12 12" aria-hidden="true"><path d="M12 0v12H0z" fill="#d8d8d8" /></svg></Corner>
                  {columns.map((c, i) => <ColHead key={c} scope="col" $on={i === 0}>{c}</ColHead>)}
                </tr>
              </thead>
              <tbody>
                {values.map((v, i) => (
                  <Row key={i}>
                    <RowHead scope="row" $on={i > 0 && i < 10}>{i < 11 ? i + 1 : ""}</RowHead>
                    <DataCell $kind={kindOf(i)}>
                      {v}
                      {i === 9 && <><FillHandle /><FillOptions aria-label="自动填充选项">
                        <Svg w={13} h={13}>
                          <path d="M1 1h6v4H1z" fill="#3b62c9" stroke="#3b62c9" /><path d="M7 1h5v4H7z" stroke="#999" /><path d="M1 5h5v3.500H1zM1 8.500h5V12H1z" stroke="#bbb" /><path d="M9.500 7v5M7 9.500h5" stroke="#666" strokeWidth="1.300" />
                        </Svg>
                      </FillOptions></>}
                    </DataCell>
                    {columns.slice(1).map((c) => <Cell key={c} />)}
                  </Row>
                ))}
              </tbody>
            </Grid>
            <Note>
              <svg width="96" height="50" viewBox="0 0 96 50" aria-hidden="true">
                <path d="M.5 1.500 11 1l-1 1.800L16 5 96 48 14 10 9 7.500 6.500 9z" fill="#e9586a" />
              </svg>
              <NoteText>得到一组等差递增的序列</NoteText>
            </Note>
          </Viewport>
          <ScrollTrack>
            <svg width="7" height="5" viewBox="0 0 7 5" aria-hidden="true"><path d="M3.500 0 7 5H0z" fill="#666" /></svg>
            <Thumb />
            <TrackSpace />
            <svg width="7" height="4" viewBox="0 0 7 4" aria-hidden="true"><path d="M0 0h7L3.500 5z" fill="#666" /></svg>
          </ScrollTrack>
        </Sheet>
      </Page>
    </>
  );
}
